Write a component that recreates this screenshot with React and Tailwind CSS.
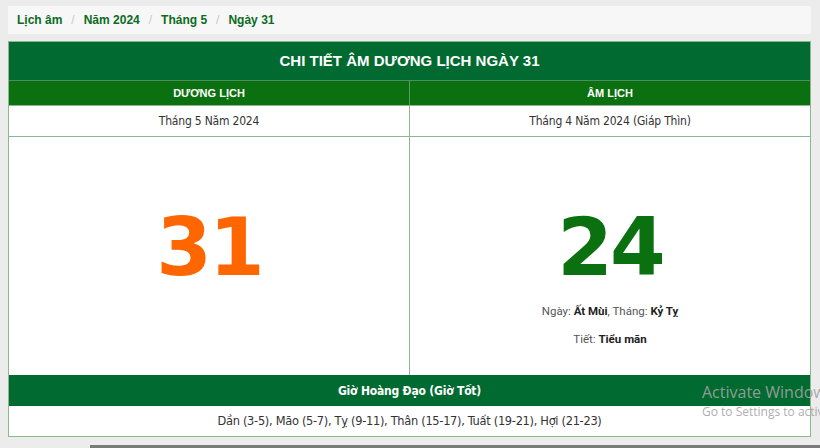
import React from "react";

const crumbs = ["Lịch âm", "Năm 2024", "Tháng 5", "Ngày 31"];

const App = () => {
  return (
    <div className="relative w-[820px] h-[448px] overflow-hidden bg-[#ececec] pt-[6px] pl-[8px] font-['Liberation_Sans',Arial,sans-serif]">
      {/* Breadcrumb */}
      <div className="w-[803px] h-[28px] bg-[#f7f7f7] flex items-center pl-[9px] text-[12px] font-bold text-[#0b6b22]">
        {crumbs.map((c, i) => (
          <React.Fragment key={c}>
            {i > 0 && <span className="px-[9px] font-normal text-[#c8c8c8]">/</span>}
            <span>{c}</span>
          </React.Fragment>
        ))}
      </div>

      {/* Detail table */}
      <div className="mt-[7px] w-[803px] border border-[#8db88d] bg-white">
        <div className="h-[39px] bg-[#016a30] flex items-center justify-center text-white text-[15px] font-bold border-b border-[#4f8f5f]">
          CHI TIẾT ÂM DƯƠNG LỊCH NGÀY 31
        </div>

        <div className="grid grid-cols-[401px_1fr] h-[24px] bg-[#0b700f] text-white text-[11px] font-bold">
          <div className="flex items-center justify-center border-r border-[#5d9a5d]">DƯƠNG LỊCH</div>
          <div className="flex items-center justify-center">ÂM LỊCH</div>
        </div>

        <div className="grid grid-cols-[401px_1fr] h-[31px] border-t border-[#8db88d] text-[12px] text-[#333] font-['DejaVu_Sans_Condensed','Liberation_Sans',sans-serif] tracking-[-0.2px]">
          <div className="flex items-center justify-center border-r border-[#8db88d]">Tháng 5 Năm 2024</div>
          <div className="flex items-center justify-center">Tháng 4 Năm 2024 (Giáp Thìn)</div>
        </div>

        <div className="grid grid-cols-[401px_1fr] h-[239px] border-t border-[#8db88d]">
          <div className="border-r border-[#8db88d] flex flex-col items-center pt-[71px]">
            <div className="text-[80px] leading-none font-bold tracking-[-3px] text-[#ff6600] font-['DejaVu_Sans',Verdana,sans-serif]">31</div>
          </div>
          <div className="flex flex-col items-center pt-[71px]">
            <div className="text-[80px] leading-none font-bold tracking-[-3px] text-[#0b700f] font-['DejaVu_Sans',Verdana,sans-serif]">24</div>
            <div className="mt-[13px] leading-[20px] text-[11.5px] text-[#555] font-['Roboto',Arial,sans-serif]">
              Ngày: <b className="text-[#222]">Ất Mùi</b>, Tháng: <b className="text-[#222]">Kỷ Tỵ</b>
            </div>
            <div className="mt-[8px] leading-[20px] text-[11.5px] text-[#555] font-['Roboto',Arial,sans-serif]">
              Tiết: <b className="text-[#222]">Tiểu mãn</b>
            </div>
          </div>
        </div>

        <div className="h-[31px] bg-[#016a30] flex items-center justify-center text-white text-[12px] font-bold font-['DejaVu_Sans_Condensed','Liberation_Sans',sans-serif] tracking-[-0.2px]">
          Giờ Hoàng Đạo (Giờ Tốt)
        </div>
        <div className="h-[30px] flex items-center justify-center text-[12.7px] text-[#333] font-['DejaVu_Sans_Condensed','Liberation_Sans',sans-serif] tracking-[-0.3px]">
          Dần (3-5), Mão (5-7), Tỵ (9-11), Thân (15-17), Tuất (19-21), Hợi (21-23)
        </div>
      </div>

      {/* Bottom scrollbar strip */}
      <div className="absolute left-[90px] right-0 bottom-0 h-[3px] bg-[#7b7b7b]" />

      {/* Windows watermark */}
      <div className="absolute left-[702px] top-[382px] whitespace-nowrap text-[#a3a3a3]/90 font-['Open_Sans',sans-serif]">
        <div className="text-[16px] leading-[20px]">Activate Windows</div>
        <div className="text-[12px] leading-[16px] mt-[2px]">Go to Settings to activate Windows.</div>
      </div>
    </div>
  );
};

export default App;
